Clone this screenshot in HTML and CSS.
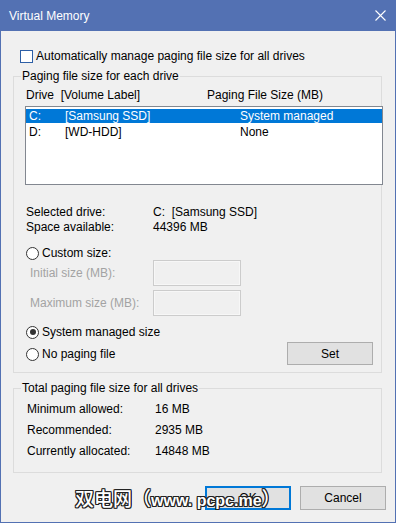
FILE: index.html
```html
<!DOCTYPE html>
<html lang="en">

<head>
    <meta charset="UTF-8">
    <meta name="viewport" content="width=device-width, initial-scale=1.0">
    <title>Virtual Memory</title>
    <link rel="stylesheet" href="styles.css">
</head>

<body>
    <div class="window">
        <div class="titlebar">
            <span class="title">Virtual Memory</span>
            <svg class="close" width="11" height="11" viewBox="0 0 11 11">
                <path d="M0.5 0.5 L10.5 10.5 M10.5 0.5 L0.5 10.5" stroke="#fff" stroke-width="1.1" fill="none" />
            </svg>
        </div>

        <div class="content">
            <div class="check-row">
                <span class="checkbox"></span>
                <span>Automatically manage paging file size for all drives</span>
            </div>

            <div class="group group-drives">
                <span class="legend">Paging file size for each drive</span>
                <div class="list-head">
                    <span class="head-drive">Drive&nbsp;&nbsp;[Volume Label]</span>
                    <span>Paging File Size (MB)</span>
                </div>
                <div class="listbox">
                    <div class="list-row selected">
                        <span class="col-drive">C:</span>
                        <span class="col-label">[Samsung SSD]</span>
                        <span>System managed</span>
                    </div>
                    <div class="list-row">
                        <span class="col-drive">D:</span>
                        <span class="col-label">[WD-HDD]</span>
                        <span>None</span>
                    </div>
                </div>

                <div class="info">
                    <div class="info-row"><span class="info-label">Selected drive:</span><span>C:&nbsp;&nbsp;[Samsung SSD]</span></div>
                    <div class="info-row"><span class="info-label">Space available:</span><span>44396 MB</span></div>
                </div>

                <div class="radio-row radio-custom">
                    <span class="radio"></span>
                    <span>Custom size:</span>
                </div>
                <div class="field-row">
                    <span class="field-label">Initial size (MB):</span>
                    <span class="textbox"></span>
                </div>
                <div class="field-row field-max">
                    <span class="field-label">Maximum size (MB):</span>
                    <span class="textbox"></span>
                </div>

                <div class="bottom-row">
                    <div class="radios">
                        <div class="radio-row">
                            <span class="radio checked"></span>
                            <span>System managed size</span>
                        </div>
                        <div class="radio-row radio-none">
                            <span class="radio"></span>
                            <span>No paging file</span>
                        </div>
                    </div>
                    <button class="btn btn-set">Set</button>
                </div>
            </div>

            <div class="group group-total">
                <span class="legend">Total paging file size for all drives</span>
                <div class="total-row"><span class="total-label">Minimum allowed:</span><span>16 MB</span></div>
                <div class="total-row"><span class="total-label">Recommended:</span><span>2935 MB</span></div>
                <div class="total-row"><span class="total-label">Currently allocated:</span><span>14848 MB</span></div>
            </div>

            <div class="buttons">
                <button class="btn btn-ok">OK</button>
                <button class="btn">Cancel</button>
            </div>
        </div>

        <div class="watermark"><span class="wm-cjk">双电网（</span>www. pcpc.me<span class="wm-cjk">）</span></div>
    </div>
</body>

</html>
```

FILE: styles.css
```css
body {
    margin: 0;
    font-family: "Liberation Sans", Arial, sans-serif;
    font-size: 12px;
    color: #000;
    background: #F0F0F0;
}

.window {
    position: relative;
    width: 396px;
    height: 523px;
    box-sizing: border-box;
    border: 1px solid #5371B3;
    border-top: none;
    background: #F0F0F0;
    overflow: hidden;
}

.titlebar {
    height: 31px;
    margin: 0 -1px;
    background: #5371B3;
    display: flex;
    align-items: center;
    justify-content: space-between;
    padding: 0 10px 0 9px;
}

.title {
    color: #fff;
    font-size: 12px;
}

.close {
    display: block;
    margin-top: -1px;
}

.content {
    padding: 0 13px 0 12px;
}

.check-row {
    display: flex;
    align-items: center;
    gap: 3px;
    height: 16px;
    margin-top: 17px;
    padding-left: 7px;
}

.checkbox {
    width: 13px;
    height: 13px;
    box-sizing: border-box;
    border: 1px solid #2D5FA6;
    background: #fff;
}

.group {
    position: relative;
    border: 1px solid #DCDCDC;
}

.legend {
    position: absolute;
    top: -9px;
    left: 7px;
    padding: 0 1px;
    line-height: 16px;
    background: #F0F0F0;
}

.group-drives {
    margin-top: 12px;
    padding: 10px 0 7px 11px;
}

.list-head {
    display: flex;
    line-height: 16px;
    padding-left: 1px;
}

.head-drive {
    width: 181px;
}

.listbox {
    width: 358px;
    height: 79px;
    box-sizing: border-box;
    margin-top: 3px;
    border: 1px solid #828790;
    background: #fff;
    padding-top: 2px;
}

.list-row {
    display: flex;
    height: 14px;
    line-height: 14px;
    padding-left: 3px;
    margin-bottom: 2px;
}

.list-row.selected {
    background: #0078D7;
    color: #fff;
}

.col-drive {
    width: 36px;
}

.col-label {
    width: 175px;
}

.info {
    margin-top: 20px;
}

.info-row {
    display: flex;
    line-height: 15px;
    padding-left: 1px;
}

.info-label {
    width: 127px;
}

.radio-row {
    display: flex;
    align-items: center;
    gap: 3px;
    height: 14px;
    padding-left: 1px;
}

.radio-custom {
    margin-top: 11px;
}

.radio {
    position: relative;
    width: 13px;
    height: 13px;
    box-sizing: border-box;
    border: 1px solid #333;
    border-radius: 50%;
    background: #fff;
}

.radio.checked::after {
    content: "";
    position: absolute;
    left: 2.5px;
    top: 2.5px;
    width: 6px;
    height: 6px;
    border-radius: 50%;
    background: #333;
}

.field-row {
    display: flex;
    align-items: center;
    height: 26px;
    padding-left: 5px;
    color: #A3A3A3;
}

.field-max {
    margin-top: 4px;
}

.field-label {
    width: 123px;
}

.textbox {
    width: 88px;
    height: 26px;
    box-sizing: border-box;
    border: 1px solid #CCCCCC;
    box-shadow: inset 0 0 0 1px #F7F7F7;
}

.bottom-row {
    display: flex;
    justify-content: space-between;
    margin-top: 9px;
}

.radio-none {
    margin-top: 8px;
}

.btn {
    font-family: inherit;
    font-size: 12px;
    color: #000;
    width: 86px;
    height: 24px;
    background: #E1E1E1;
    border: 1px solid #ADADAD;
    padding: 0;
}

.btn-set {
    height: 23px;
    margin: 17px 8px 0 0;
}

.group-total {
    margin-top: 15px;
    padding: 10px 0 10px 13px;
}

.total-row {
    display: flex;
    line-height: 21px;
}

.total-label {
    width: 128px;
}

.buttons {
    display: flex;
    justify-content: flex-end;
    gap: 9px;
    margin: 13px -4px 0 0;
}

.btn-ok {
    border: 2px solid #0078D7;
}

.watermark {
    position: absolute;
    left: 74px;
    top: 485px;
    font-family: "Liberation Sans", "Noto Sans CJK SC", sans-serif;
    font-size: 16px;
    font-weight: bold;
    color: #fff;
    line-height: 26px;
    white-space: nowrap;
    text-shadow: -1px -1px 0 #222, 1px -1px 0 #222, -1px 1px 0 #222, 1px 1px 0 #222, 0 1px 0 #222, 0 -1px 0 #222, 1px 0 0 #222, -1px 0 0 #222;
}

.wm-cjk {
    font-family: "Noto Sans CJK SC", sans-serif;
    font-size: 19px;
    font-weight: 500;
}
```
